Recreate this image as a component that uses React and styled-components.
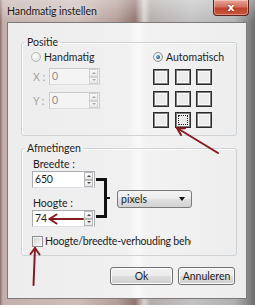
import React from "react";
import styled, { createGlobalStyle } from "styled-components";

const GlobalStyle = createGlobalStyle`
  html, body {
    margin: 0;
    padding: 0;
    background: #ffffff;
  }
  body {
    font-family: Lato, "Noto Sans", sans-serif;
    font-size: 10.5px;
    color: #1c1c1c;
  }
  * {
    box-sizing: border-box;
  }
`;

const Window = styled.div`
  position: relative;
  width: 255px;
  height: 305px;
  display: flex;
  flex-direction: column;
  padding: 0 8px 6px 7px;
  overflow: hidden;
  background:
    linear-gradient(to bottom, rgba(255, 255, 255, 0.35), rgba(255, 255, 255, 0) 22px),
    linear-gradient(
      to right,
      #8c6f6b 0,
      #c3b0ac 3px,
      #cdbdb9 30%,
      #b59d98 46%,
      #8e746e 53%,
      #d9d2cf 56.5%,
      #b3adab 59%,
      #c2c2c2 75%,
      #b0b0b0 92%,
      #8a8a8a 97%,
      #6c6c6c 100%
    );
`;

const TitleBar = styled.div`
  height: 22px;
  flex: none;
  display: flex;
  align-items: flex-start;
`;

const Title = styled.span`
  padding-top: 4px;
  line-height: 14px;
  letter-spacing: -0.1px;
  color: #1a1a1a;
  text-shadow: 0 0 6px rgba(255, 255, 255, 0.8);
`;

const CloseButton = styled.div`
  margin-left: auto;
  margin-right: -2px;
  width: 36px;
  height: 16px;
  display: flex;
  align-items: center;
  justify-content: center;
  border: 1px solid #5d2219;
  border-top: none;
  border-radius: 0 0 4px 4px;
  background: linear-gradient(to bottom, #e9a597 0, #d4705f 45%, #c0432f 55%, #c8553c 100%);
  box-shadow: inset 0 0 0 1px rgba(255, 255, 255, 0.35);
  color: #ffffff;
  font-family: "DejaVu Sans", sans-serif;
  font-weight: bold;
  font-size: 11px;
  line-height: 1;
  text-shadow: 0 0 2px #5a1a10;
`;

const Client = styled.div`
  flex: 1;
  display: flex;
  flex-direction: column;
  padding: 0 9px 0 13px;
  border: 1px solid #7f7a79;
  background: linear-gradient(
    to right,
    #eeeded 0,
    #f1f0f0 50%,
    #f9f9f9 55%,
    #f2f2f2 58%,
    #ededed 100%
  );
`;

const Group = styled.fieldset`
  margin: ${(p) => p.$top}px 0 0 0;
  padding: ${(p) => p.$pad};
  border: 1px solid #cdd3d7;
  border-radius: 3px;
  box-shadow: inset 1px 1px 0 #ffffff;
  min-width: 0;
`;

const Legend = styled.legend`
  padding: 0 2px;
  margin-left: ${(p) => p.$shift}px;
  line-height: 14px;
  color: #1c1c1c;
`;

const PositionGrid = styled.div`
  display: grid;
  grid-template-columns: 122px 1fr;
`;

const Column = styled.div`
  display: flex;
  flex-direction: column;
`;

const RadioRow = styled.label`
  height: 14px;
  display: flex;
  align-items: center;
  gap: 3px;
`;

const Radio = styled.span`
  position: relative;
  width: 10px;
  height: 10px;
  flex: none;
  border-radius: 50%;
  border: 1px solid ${(p) => (p.$disabled ? "#b9b9b9" : "#8e8f8f")};
  background: radial-gradient(circle at 40% 35%, #ffffff 0, #e8e8e8 60%, #d6d6d6 100%);

  &::after {
    content: "";
    display: ${(p) => (p.$checked ? "block" : "none")};
    position: absolute;
    left: 2px;
    top: 2px;
    width: 4px;
    height: 4px;
    border-radius: 50%;
    background: radial-gradient(circle at 35% 35%, #8fc2d9 0, #2c6a8c 55%, #143b52 100%);
  }
`;

const SpinRow = styled.div`
  display: flex;
  align-items: center;
  margin-top: ${(p) => p.$top}px;
  padding-left: 2px;
`;

const AxisLabel = styled.span`
  width: 16px;
  color: #a3a3a3;
`;

const SpinBox = styled.div`
  display: flex;
  width: ${(p) => p.$w}px;
  height: 17px;
  border: 1px solid ${(p) => (p.$disabled ? "#c9cbcf" : "#abadb3")};
  border-bottom-color: ${(p) => (p.$disabled ? "#d9dbde" : "#dbdfe6")};
  background: ${(p) => (p.$disabled ? "#f4f4f4" : "#ffffff")};
`;

const SpinValue = styled.span`
  flex: 1;
  padding-left: 2px;
  line-height: 15px;
  letter-spacing: -0.2px;
  color: ${(p) => (p.$disabled ? "#8c8c8c" : "#1c1c1c")};
`;

const SpinButtons = styled.div`
  width: 9px;
  margin: 0 1px 0 0;
  display: flex;
  flex-direction: column;
`;

const SpinArrow = styled.div`
  flex: 1;
  display: flex;
  align-items: center;
  justify-content: center;
  border: 1px solid ${(p) => (p.$disabled ? "#d0d0d0" : "#b8b8b8")};
  background: linear-gradient(to bottom, #fbfbfb, #e6e6e6);

  &::after {
    content: "";
    border-left: 2px solid transparent;
    border-right: 2px solid transparent;
    ${(p) =>
      p.$up
        ? `border-bottom: 2px solid ${p.$disabled ? "#a8a8a8" : "#4a4a4a"};`
        : `border-top: 2px solid ${p.$disabled ? "#a8a8a8" : "#4a4a4a"};`}
  }
`;

const Squares = styled.div`
  margin-top: 5px;
  display: grid;
  grid-template-columns: repeat(3, 16px);
  grid-auto-rows: 16px;
  gap: 5.5px;
`;

const Square = styled.div`
  position: relative;
  border: 1px solid #2b2b2b;
  box-shadow: inset 0 0 0 1px #7d7d7d, inset 0 0 0 2px #fafafa;
  background: #ececec;

  &::after {
    content: "";
    display: ${(p) => (p.$focused ? "block" : "none")};
    position: absolute;
    inset: 2px;
    border: 1px dotted #222;
  }
`;

const SizeRow = styled.div`
  display: flex;
  align-items: flex-start;
`;

const SizeColumn = styled.div`
  width: 63px;
  display: flex;
  flex-direction: column;
`;

const FieldLabel = styled.span`
  margin-top: ${(p) => p.$top}px;
  padding-left: 1px;
  height: 14px;
  line-height: 14px;
`;

const Bracket = styled.div`
  position: relative;
  margin: 23px 10px 0 1px;
  width: 11px;
  height: 40px;
  border: 3px solid #111;
  border-left: none;

  &::after {
    content: "";
    position: absolute;
    left: 100%;
    top: 15.5px;
    width: 6px;
    height: 2.5px;
    background: #111;
  }
`;

const Dropdown = styled.div`
  margin-top: 35px;
  width: 75px;
  height: 18px;
  display: flex;
  align-items: center;
  justify-content: space-between;
  padding: 0 6px 0 3px;
  border: 1px solid #7a7a7a;
  border-radius: 3px;
  background: linear-gradient(to bottom, #f4f4f4 0, #ececec 45%, #dedede 55%, #d2d2d2 100%);

  &::after {
    content: "";
    border-left: 3.5px solid transparent;
    border-right: 3.5px solid transparent;
    border-top: 4px solid #111;
  }
`;

const CheckRow = styled.label`
  margin-top: 7px;
  height: 14px;
  display: flex;
  align-items: center;
  gap: 2px;
`;

const CheckBox = styled.span`
  width: 11px;
  height: 11px;
  flex: none;
  border: 1px solid #8f8f8f;
  box-shadow: inset 0 0 0 1px #f4f4f4;
  background: linear-gradient(135deg, #cfcfcf 0, #eeeeee 70%, #f7f7f7 100%);
`;

const CheckText = styled.span`
  width: 146px;
  overflow: hidden;
  white-space: nowrap;
  line-height: 14px;
  letter-spacing: -0.2px;
`;

const ButtonRow = styled.div`
  margin-top: 11px;
  padding-right: 2px;
  display: flex;
  justify-content: flex-end;
  gap: 5px;
`;

const Button = styled.div`
  width: ${(p) => p.$w}px;
  height: 18px;
  display: flex;
  align-items: center;
  justify-content: center;
  border: 1px solid #707070;
  border-radius: 3px;
  box-shadow: inset 0 0 0 1px #fcfcfc;
  background: linear-gradient(to bottom, #f2f2f2 0, #ebebeb 48%, #dddddd 52%, #cfcfcf 100%);
  color: #1c1c1c;
`;

const Annotations = styled.svg`
  position: absolute;
  left: 0;
  top: 0;
  pointer-events: none;
`;

const Arrow = ({ d, head }) => (
  <g fill="none" stroke="#861a1e" strokeWidth="2" strokeLinecap="round" strokeLinejoin="round">
    <path d={d} />
    <path d={head} />
  </g>
);

const Spin = ({ value, width, disabled }) => (
  <SpinBox $w={width} $disabled={disabled}>
    <SpinValue $disabled={disabled}>{value}</SpinValue>
    <SpinButtons>
      <SpinArrow $up $disabled={disabled} />
      <SpinArrow $disabled={disabled} />
    </SpinButtons>
  </SpinBox>
);

export default function App() {
  return (
    <>
      <GlobalStyle />
      <Window>
        <TitleBar>
          <Title>Handmatig instellen</Title>
          <CloseButton>x</CloseButton>
        </TitleBar>
        <Client>
          <Group $top={12} $pad="1px 0 7px 9px">
            <Legend $shift={-6}>Positie</Legend>
            <PositionGrid>
              <Column>
                <RadioRow>
                  <Radio $disabled />
                  Handmatig
                </RadioRow>
                <SpinRow $top={4}>
                  <AxisLabel>X :</AxisLabel>
                  <Spin value="0" width={51} disabled />
                </SpinRow>
                <SpinRow $top={7}>
                  <AxisLabel>Y :</AxisLabel>
                  <Spin value="0" width={51} disabled />
                </SpinRow>
              </Column>
              <Column>
                <RadioRow>
                  <Radio $checked />
                  Automatisch
                </RadioRow>
                <Squares>
                  {Array.from({ length: 9 }, (_, i) => (
                    <Square key={i} $focused={i === 7} />
                  ))}
                </Squares>
              </Column>
            </PositionGrid>
          </Group>

          <Group $top={5} $pad="0 0 7px 10px">
            <Legend $shift={-7}>Afmetingen</Legend>
            <SizeRow>
              <SizeColumn>
                <FieldLabel $top={2}>Breedte :</FieldLabel>
                <Spin value="650" width={63} />
                <FieldLabel $top={8}>Hoogte :</FieldLabel>
                <Spin value="74" width={63} />
              </SizeColumn>
              <Bracket />
              <Dropdown>pixels</Dropdown>
            </SizeRow>
            <CheckRow>
              <CheckBox />
              <CheckText>Hoogte/breedte-verhouding behouden</CheckText>
            </CheckRow>
          </Group>

          <ButtonRow>
            <Button $w={63}>Ok</Button>
            <Button $w={57}>Annuleren</Button>
          </ButtonRow>
        </Client>

        <Annotations width="255" height="305" viewBox="0 0 255 305">
          <Arrow d="M218 153 L177 128" head="M181 135 L177 128 L185 128.3" />
          <Arrow d="M83 219 L49.5 219" head="M56.5 214.5 L49.5 219 L56.5 223.5" />
          <Arrow d="M33.5 285 L35 248" head="M30.5 254 L35 248 L39.5 254.5" />
        </Annotations>
      </Window>
    </>
  );
}
